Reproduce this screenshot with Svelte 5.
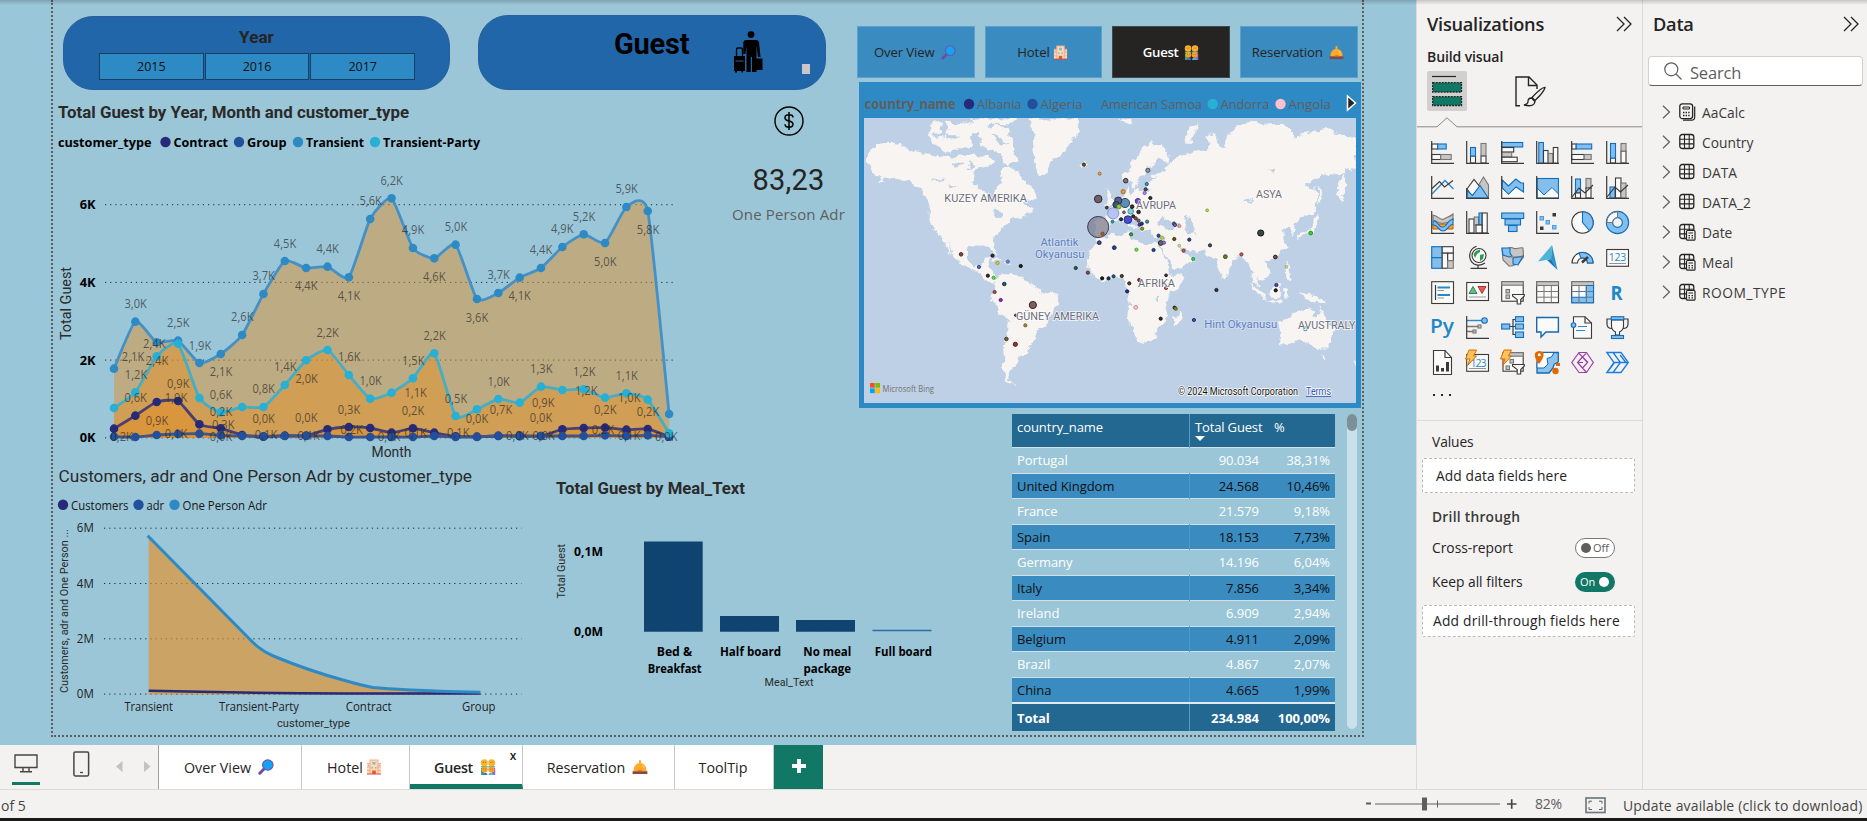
<script>
  const xs = Array.from({ length: 27 }, (_, i) => 114 + i * 21.35);
  const toY = (list) => list.map((v) => 160 + v / 3);
  const series = [
    { name: 'Transient', line: '#4590c4', dot: '#2e8ac4', ys: toY([626, 485, 547, 542, 609, 582, 525, 402, 303, 324, 320, 352, 177, 115, 264, 295, 254, 417, 399, 353, 324, 261, 223, 249, 141, 153, 762]) },
    { name: 'Transient-Party', line: '#43aec6', dot: '#28b0d4', ys: toY([744, 697, 589, 551, 714, 757, 741, 741, 675, 601, 570, 645, 716, 698, 655, 580, 768, 748, 717, 728, 680, 690, 688, 713, 700, 719, 820]) },
    { name: 'Contract', line: '#4a4070', dot: '#262a78', ys: toY([806, 767, 726, 723, 793, 805, 825, 830, 827, 827, 808, 801, 804, 818, 805, 818, 829, 830, 828, 827, 828, 808, 804, 803, 809, 807, 830]) },
    { name: 'Group', line: '#405588', dot: '#24509b', ys: toY([830, 831, 825, 822, 821, 826, 828, 829, 828, 828, 828, 831, 831, 831, 831, 828, 831, 831, 827, 829, 828, 828, 828, 826, 828, 826, 830]) }
  ];
  function curve(ys) {
    const k = 1 / 11;
    let d = `M${xs[0]} ${ys[0]}`;
    for (let i = 0; i < ys.length - 1; i++) {
      const a = Math.max(i - 1, 0);
      const b = Math.min(i + 2, ys.length - 1);
      d += `C${xs[i] + (xs[i + 1] - xs[a]) * k} ${ys[i] + (ys[i + 1] - ys[a]) * k} ${xs[i + 1] - (xs[b] - xs[i]) * k} ${ys[i + 1] - (ys[b] - ys[i]) * k} ${xs[i + 1]} ${ys[i + 1]}`;
    }
    return d;
  }
  const pointLabels = [
    ['3,0K', 135.7, 303.7], ['2,5K', 178.3, 322.7], ['2,4K', 154.3, 343.7], ['1,9K', 200, 345.7], ['2,1K', 133, 356.7], ['2,4K', 157, 360.7], ['1,2K', 136, 374.7], ['2,1K', 221, 371.7],
    ['0,9K', 178.3, 383.7], ['0,6K', 135.7, 397.7], ['1,0K', 176, 397.7], ['0,6K', 221, 394.7], ['0,2K', 221, 411.7], ['0,9K', 157, 420.7], ['0,3K', 223.3, 424.7], ['0,2K', 121.7, 436.7], ['0,1K', 176, 434], ['0,0K', 221, 436.3],
    ['2,6K', 242.3, 316.7], ['3,7K', 263.7, 275.7], ['4,5K', 285, 243.7], ['4,4K', 306.3, 286], ['4,4K', 327.7, 248.7], ['4,1K', 349, 295.7], ['5,6K', 370.7, 201], ['2,2K', 327.7, 332.7], ['1,6K', 349.3, 356.7], ['1,0K', 370.7, 380.7],
    ['1,4K', 285.3, 366.7], ['2,0K', 306.7, 378.7], ['0,8K', 263.7, 388.7], ['0,0K', 263.7, 418.7], ['0,0K', 306.3, 417.7], ['0,3K', 349, 409.7], ['0,2K', 351.7, 429.3], ['0,1K', 266, 434.3], ['0,1K', 308.7, 435.3],
    ['6,2K', 391.7, 180.7], ['4,9K', 413, 229.7], ['5,0K', 456, 226.7], ['4,6K', 434.3, 276.7], ['3,6K', 477, 317.7], ['3,7K', 498.7, 274.7], ['4,1K', 519.7, 295.7], ['4,4K', 541, 249.3], ['4,9K', 562.3, 228.7], ['5,2K', 584, 216.7],
    ['5,0K', 605.3, 261.7], ['5,9K', 626.7, 189], ['5,8K', 648, 229.7], ['2,2K', 434.7, 335.7], ['1,5K', 413.3, 360.3], ['1,1K', 415.7, 392.7], ['0,2K', 413, 410.3], ['0,1K', 415.7, 432.7], ['0,0K', 389, 436.3], ['0,5K', 456, 398.3],
    ['0,0K', 477, 418.7], ['0,1K', 458.3, 432.3], ['1,0K', 498.7, 381.7], ['0,7K', 501, 409.7], ['1,3K', 541.3, 368.7], ['0,9K', 543.3, 402.7], ['0,0K', 541, 417.7], ['1,2K', 584.3, 371.7], ['1,2K', 586.3, 390.7], ['0,2K', 605.3, 409.7],
    ['0,2K', 603, 429.3], ['1,1K', 626.7, 375.7], ['1,0K', 629.3, 397.3], ['0,2K', 648, 411.3], ['0,1K', 629, 435.3], ['0,0K', 517.3, 436], ['0,0K', 543.7, 436], ['0,0K', 666.3, 436.3]
  ];

  const land = [
    'M45 480L55 450L75 430L115 426L180 452L235 462L290 470L340 462L385 468L400 484L372 500L345 516L343 550L372 570L385 602L400 598L398 570L425 548L420 510L440 500L462 508L480 535L515 565L525 590L505 602L480 605L515 625L490 645L450 655L430 680L412 700L398 725L411 765L402 764L388 735L350 735L330 745L328 775L345 800L368 795L375 775L392 772L386 800L402 818L402 838L420 842L398 850L375 835L350 810L320 795L300 785L270 715L285 760L275 750L252 700L232 684L222 660L222 620L215 590L190 560L160 540L130 535L105 532L75 552L90 530L60 520Z',
    'M220 370L270 360L300 372L340 365L380 356L392 380L345 400L330 440L270 455L225 430Z',
    'M360 390L400 375L440 380L450 430L470 480L440 495L420 460L370 440Z', 'M330 354H470L455 372L350 368Z',
    'M495 354H640L632 410L590 465L560 480L548 525L530 527L515 480L508 440L518 400Z',
    'M640 490L655 484L671 492L655 504L643 500Z',
    'M405 832L430 820L470 828L505 845L525 868L580 888L583 910L558 945L550 975L525 992L515 1020L495 1050L495 1060L470 1075L462 1095L448 1100L447 1120L440 1140L460 1157L436 1145L430 1110L430 1060L438 1010L440 960L415 935L392 895L402 862Z',
    'M690 718L720 705L785 695L790 718L830 735L860 728L872 748L890 800L900 828L933 822L922 855L888 890L882 920L888 955L860 985L855 1010L830 1025L805 1028L793 985L780 950L786 905L775 875L775 845L745 830L700 840L675 822L662 790L668 755Z',
    'M926 932L928 950L915 980L905 978L906 950Z',
    'M767 542L762 522L790 490L810 450L840 425L870 435L890 460L888 490L856 474L848 490L830 505L815 530L805 562L795 574L788 545Z',
    'M685 702L684 660L722 655L715 632L735 612L757 592L770 575L773 555L785 575L828 570L832 545L860 535L840 530L870 512L895 488L930 462L975 452L1005 445L1000 410L1015 396L1030 430L1050 440L1055 405L1090 375L1120 360L1160 372L1210 370L1250 405L1330 385L1417 425V505L1385 512L1388 560L1375 602L1364 585L1366 545L1390 520L1330 522L1290 535L1270 560L1305 565L1308 605L1290 640L1260 650L1240 665L1250 690L1240 702L1225 682L1210 682L1218 735L1200 765L1165 780L1172 825L1150 835L1132 825L1145 862L1125 840L1115 790L1095 765L1070 780L1048 835L1030 800L1025 775L985 755L950 750L920 738L935 762L965 772L950 792L905 810L890 780L870 735L880 715L845 708L840 690L822 688L812 694L800 672L778 655L800 688L790 684L765 657L735 665L715 702L692 710Z',
    'M716 560L730 570L742 606L715 614L722 592Z', 'M940 430L945 385L975 365L970 385L952 410L958 430Z', 'M745 360L790 354L785 372Z',
    'M1309 636L1316 652L1300 690L1270 700L1250 716L1258 698L1290 680Z', 'M1313 560L1322 590L1316 618L1310 600Z',
    'M1118 845L1150 872L1165 897L1155 897L1130 870Z', 'M1160 900L1215 904L1200 910Z', 'M1174 870L1202 848L1206 865L1195 895L1178 890Z', 'M1218 785L1226 790L1236 840L1224 830Z', 'M1215 862L1228 865L1220 892L1213 880Z',
    'M1255 873L1290 882L1332 903L1322 910L1270 895Z',
    'M1198 968L1230 950L1255 935L1280 923L1297 930L1290 945L1305 953L1315 920L1330 950L1352 988L1350 1012L1333 1047L1310 1048L1290 1030L1260 1015L1230 1030L1202 1032L1206 1005Z',
    'M1318 1064L1330 1066L1324 1078Z', 'M1408 1078H1417V1096Z', 'M385 768L425 778L408 780Z', 'M430 784L450 788L432 792Z'
  ];
  const water = ['M858 672L880 652L898 660L925 680L880 684Z', 'M935 650L950 645L956 665L966 702L944 695Z', 'M868 745L905 815L895 800Z', 'M810 560L835 515L825 560L845 566L830 574Z', 'M270 550L300 562L280 566Z', 'M225 540L260 530L250 542Z', 'M395 625L430 630L420 660L405 650Z', 'M850 888L866 892L858 902Z', 'M1170 508L1186 505L1180 522Z', 'M1095 610L1130 590L1118 606Z', 'M230 395L290 405L300 415L240 408Z', 'M260 360L275 380L262 420L255 390Z', 'M300 440L345 452L310 458Z', 'M395 400L440 430L420 436Z', 'M340 480L350 500L325 506Z', 'M285 480L320 492L300 498Z'];
  const bubbles = [
    [695, 681, 11, '#77778eb8', '#332f44'], [737, 640, 6, '#b7c3f2', '#7a8fd0'], [770, 609, 5, '#5a8fb4', '#1d3f66'], [778, 659, 4.3, '#4650c8', '#20269a'], [695, 597, 4.2, '#6f6068', '#2b2022'], [751, 602, 4, '#5b5b8a', '#24244a'], [745, 614, 3.6, '#3d5570', '#1b2f44'], [753, 620, 2.6, '#9fc93c', '#5e8420'], [786, 634, 3.2, '#7fd0de', '#328ea0'], [806, 603, 3, '#7746c8', '#44208c'],
    [512, 915, 4, '#80605f', '#2d1414'], [1150, 699, 3.5, '#3e4744', '#0d1110'], [772, 542, 2.7, '#767688', '#222'], [834, 511, 2.5, '#8f98a0', '#444'], [765, 575, 2.5, '#e8973e', '#a3651c'], [655, 494, 2, '#775330', '#30200d'], [699, 521, 2, '#d99a4c', '#a87028'], [831, 552, 2, '#3c93bd', '#155b8a'], [828, 568, 2, '#555', '#222'], [825, 579, 2, '#a28be0', '#7358b8'], [841, 594, 2, '#333', '#111'], [808, 636, 2.2, '#333', '#111'], [790, 620, 2.2, '#333', '#111'], [767, 637, 1.8, '#777', '#444'], [719, 623, 1.8, '#444', '#222'], [793, 649, 2, '#333', '#111'], [800, 655, 2, '#8c4a4a', '#531f1f'], [759, 658, 2, '#334', '#112'], [735, 665, 1.8, '#22a0b0', '#0e6878'], [808, 662, 2, '#6a6a50', '#333'], [811, 674, 2, '#444498', '#1f1f55'], [817, 671, 2, '#312ea0', '#17145a'], [832, 665, 2, '#419096', '#205a60'], [818, 686, 2, '#86a023', '#4b5d12'], [787, 703, 2, '#35a044', '#176020'], [707, 701, 2, '#b5661e', '#743a0a'],
    [864, 707, 2, '#1f5b9a', '#0d2f58'], [874, 713, 2, '#d8d23e', '#a09a20'], [870, 729, 2.8, '#666', '#222'], [879, 728, 2, '#8a72d0', '#553f99'], [907, 671, 2, '#6c6060', '#3c3434'], [910, 675, 2, '#7266a8', '#3c3468'], [922, 678, 2, '#e0a8a8', '#b77676'], [908, 717, 2, '#6b5320', '#33260b'], [950, 719, 2, '#334880', '#131e44'], [922, 737, 1.8, '#ddd8a0', '#a9a25b'], [934, 752, 2, '#c05a5a', '#803030'], [961, 777, 2, '#2fd05a', '#17943a'], [1000, 631, 1.8, '#b5e04c', '#7ba51e'], [1290, 699, 2.3, '#2fd42f', '#139813'], [1008, 736, 2, '#4d4668', '#221c38'], [1051, 770, 2.3, '#6c8030', '#333f10'], [1096, 763, 2, '#b96060', '#7c2f2f'], [1191, 771, 2.3, '#80504e', '#2f1515'], [1222, 800, 1.8, '#d6dc9e', '#96a05c'], [1194, 855, 2, '#4a4ab0', '#1e1e66'], [1192, 871, 2, '#222c2c', '#000'], [1026, 870, 2, '#333', '#111'], [963, 960, 2, '#5a4b98', '#2d2160'], [1275, 986, 2.5, '#9bd6e4', '#3a8aa6'],
    [698, 728, 2.3, '#4b4b80', '#1d1d3e'], [740, 743, 2.3, '#27409a', '#101f55'], [802, 749, 2, '#6fe04c', '#38a51c'], [850, 750, 2, '#27409a', '#101f55'], [632, 804, 2, '#2c5b54', '#112e29'], [666, 818, 2, '#7d4f52', '#4a2426'], [706, 835, 2, '#222', '#000'], [724, 835, 2, '#213c4e', '#091a26'], [738, 829, 2, '#285c80', '#0f3048'], [761, 828, 2, '#4a4a30', '#1e1e0e'], [782, 850, 2, '#5b3a3a', '#2a1212'], [810, 840, 2, '#8a3434', '#4c1010'], [885, 826, 1.8, '#444', '#111'], [885, 864, 2, '#b06058', '#70302a'], [776, 874, 2, '#2a2f90', '#11144c'], [800, 922, 2.3, '#f2c9cd', '#d07c86'], [870, 956, 2, '#28303a', '#0a0d12'], [909, 923, 2, '#6b2a2a', '#360d0d'], [912, 926, 2, '#8d8d1c', '#565608'],
    [311, 763, 2.2, '#7c5048', '#3f201b'], [361, 801, 2, '#5a6fb8', '#2e4080'], [399, 767, 2, '#3a2c2c', '#160c0c'], [413, 789, 2, '#d8d23e', '#97911d'], [442, 785, 2, '#6a86cc', '#4260a4'], [478, 798, 2, '#222', '#000'], [386, 827, 2, '#382c38', '#120c12'], [402, 833, 2, '#60e048', '#30a020'], [432, 852, 2.2, '#245a66', '#0c2e36'], [405, 876, 2, '#a04c5c', '#702838'], [422, 900, 2, '#8a30b0', '#551078'], [464, 946, 1.6, '#5a2626', '#300'], [491, 976, 2, '#a58a40', '#6a5820'], [438, 1017, 2.2, '#7a6438', '#423416'], [463, 1033, 2.5, '#8f3434', '#541212']
  ];
  const mapLabels = [
    ['KUZEY AMERIKA', 944.3, 202, 82.5, 'l'], ['ASYA', 1256, 198, 26, 'l'], ['AVRUPA', 1136, 208.5, 40, 'l'], ['AFRIKA', 1138, 286.5, 37, 'l'], ['GÜNEY AMERIKA', 1016, 319.5, 83, 'l'], ['AVUSTRALY', 1298, 328.5, 57.5, 'l'],
    ['Atlantik', 1040.4, 246, 38, 'o'], ['Okyanusu', 1035, 258, 49.6, 'o'], ['Hint Okyanusu', 1204.3, 328, 73, 'o']
  ];

  const rows = [
    ['Portugal', '90.034', '38,31%'], ['United Kingdom', '24.568', '10,46%'], ['France', '21.579', '9,18%'], ['Spain', '18.153', '7,73%'], ['Germany', '14.196', '6,04%'],
    ['Italy', '7.856', '3,34%'], ['Ireland', '6.909', '2,94%'], ['Belgium', '4.911', '2,09%'], ['Brazil', '4.867', '2,07%'], ['China', '4.665', '1,99%']
  ];
  const nav = [['Over View', 'lens'], ['Hotel', 'hotel'], ['Guest', 'people'], ['Reservation', 'bell']];
  const tabs = [
    { name: 'Over View', icon: 'lens', width: 143 }, { name: 'Hotel', icon: 'hotel', width: 108 }, { name: 'Guest', icon: 'people', width: 113 },
    { name: 'Reservation', icon: 'bell', width: 152 }, { name: 'ToolTip', icon: '', width: 99 }
  ];
  const tables = [['AaCalc', 'calc'], ['Country', 'grid'], ['DATA', 'grid'], ['DATA_2', 'grid'], ['Date', 'calcgrid'], ['Meal', 'calcgrid'], ['ROOM_TYPE', 'calcgrid']];

  const K = 'stroke="#3b3a39" stroke-width="1.2"';
  const B = 'fill="#83beec" stroke="#106ebe" stroke-width="1.1"';
  const G = 'fill="#c8c6c4" stroke="#797775" stroke-width="1.1"';
  const W = 'fill="#fafafa" stroke="#3b3a39" stroke-width="1.1"';
  const axis = `<path d="M.7 0V22.4H23" fill="none" ${K}/>`;
  const r = (x, y, w, h, s) => `<rect x="${x}" y="${y}" width="${w}" height="${h}" ${s}/>`;
  const p = (d, s) => `<path d="${d}" ${s}/>`;
  const N = 'fill="none"';
  const bolt = p('M3 -1H10.5L7.5 5H10.500L1.5 14.5L4 8H-.5Z', 'fill="#fcc25b" stroke="#d86b00" stroke-width="1"');
  const funnel = p('M11.5 13.5H23.3V15L19.7 18.5V23H16.2V18.5L11.5 15Z', W);
  const icons = [
    r(.7, 3, 6, 5, W) + r(6.7, 3, 8.5, 5, B) + r(.7, 13.5, 9, 5, W) + r(9.7, 13.5, 10.5, 5, G) + axis,
    r(4.5, 15, 5, 7, W) + r(4.5, 6.5, 5, 8.5, B) + r(15, 15, 5, 7, W) + r(15, 2.5, 5, 12, G) + axis,
    r(.7, 1.5, 21, 4.5, B) + r(.7, 6.5, 12, 4.5, W) + r(.7, 11.5, 10, 4.5, G) + r(.7, 16.2, 15.5, 4.5, W) + axis,
    r(2.8, 1.5, 4.6, 20.7, B) + r(7.5, 9.5, 4.5, 12.7, W) + r(12.3, 12.5, 4.7, 9.7, G) + r(17.3, 6.5, 4.5, 15.7, W) + axis,
    r(.7, 3, 4.5, 5, W) + r(5.2, 3, 15.5, 5, B) + r(.7, 13.5, 12.5, 5, W) + r(13.2, 13.5, 7, 5, G) + axis,
    r(4.5, 17, 5, 5, W) + r(4.5, 2.5, 5, 14.5, B) + r(15, 10, 5, 12, W) + r(15, 2.5, 5, 7.5, G) + axis,
    p('M1 18L14 4.5L22.5 13', `${N} stroke="#2a87c9" stroke-width="1.3"`) + p('M1 12.5L8.5 5.5L13.5 11L22 4.5', `${N} ${K}`) + axis,
    p('M9 15L17.5 1L22.5 9V22H14Z', G) + p('M1 13L8 3.5L14 11L6 20Z', W) + p('M1 22V14.5L6.5 19.5L14 9.5L22.3 22Z', B) + p('M.7 12V22.4H23', `${N} ${K}`),
    p('M1.2 4L7.5 10L14.8 3L20 7H22.5V16L15 11L7.5 18.5L1.2 12Z', B) + p('M1.2 13L7.5 19L15 12L22.5 18V22H1.2Z', 'fill="#fafafa"') + axis,
    r(1.2, 2.5, 21.2, 19, B) + p('M1.2 12L8 19L16 11.5L22.5 18V22H1.2Z', 'fill="#fafafa" stroke="#106ebe" stroke-width="1"') + axis,
    r(4.5, 3, 5, 14, B) + r(4.5, 17, 5, 5, W) + r(15, 2.5, 5, 10, G) + r(15, 12, 5, 10, W) + p('M1 21L8 12L14 17L22 9', `${N} ${K}`) + axis,
    r(4, 11, 5, 11, B) + r(9.5, 2, 5.5, 20, W) + r(15, 7, 5, 15, G) + p('M1 21L9 11L14.5 16L22 9', `${N} ${K}`) + axis,
    p('M2 4C8 5 9 10 13 8S20 5 22 3V9C17 12 14 13 9 12S5 9 2 9Z', G) + p('M2 13H22V18H2Z', 'fill="#f9a13a" stroke="#b85c00"') + p('M2 10C7 9 7 17 12 16S15 10 22 8V13C17 14 17 20 12 20S7 13 2 14Z', B) + axis,
    r(3, 8, 5, 14, W) + r(8.2, 6, 4.5, 8, G) + r(13, 2, 3, 12, B) + r(16.2, 2, 5, 20, W) + r(10, 14, 6, 8, W) + axis,
    r(.7, 2, 22, 5.5, B) + r(4, 8, 15.5, 6, B) + r(7.5, 14.5, 8.5, 6, B),
    r(4, 5.5, 3.5, 3.5, 'fill="#83beec" stroke="#4d9bdb"') + r(16.5, 2, 3.5, 3.5, 'fill="#3b3a39"') + r(10, 9.5, 3.5, 3.5, 'fill="#83beec" stroke="#4d9bdb"') + r(4, 15.5, 3.5, 3.5, 'fill="#3b3a39"') + r(16.5, 14.5, 3.5, 3.5, 'fill="#83beec" stroke="#4d9bdb"') + axis,
    `<circle cx="11.5" cy="11.5" r="10.7" ${W}/>` + p('M11.5 .8A10.7 10.7 0 0 1 18.5 19.5L11.5 11.5Z', B),
    `<circle cx="11.5" cy="11.5" r="8" fill="none" stroke="#106ebe" stroke-width="7.4"/><circle cx="11.5" cy="11.5" r="8" fill="none" stroke="#83beec" stroke-width="5.2"/>` + p('M.8 11.5A10.7 10.7 0 0 1 11.5 .8V6.5A5 5 0 0 0 6.5 11.5Z', 'fill="#fafafa" stroke="#797775"'),
    r(.7, .7, 10.5, 11, B) + r(.7, 11.7, 10.5, 10.6, B) + r(11.2, .7, 11.1, 6.5, W) + r(11.2, 7.2, 5.5, 15, W) + r(16.7, 7.2, 5.6, 7.5, W) + r(16.7, 14.7, 5.6, 7.6, G),
    `<circle cx="13" cy="9.5" r="7" ${W}/>` + p('M10 5L14 3.5L14 6L11 8L9 12L7.5 8ZM14 9L18 8L17 13L14 15Z', 'fill="#2b9b4c"') + p('M10.5 .3A10 10 0 0 0 8 18C12 20 16 19 19 17M12 19V22M4.5 22.3H21', `${N} ${K}`),
    p('M1 3C5 4 9 0 12 2S18 1 22 2L22.5 11L18 17L11 20L8 20L2 14Z', G) + p('M1 2H9V7L11 10L8 11L2 9Z M12 12L22 10L17 19L12 18Z', B) + p('M9 11H22', `${N} stroke="#797775"`),
    p('M16 -1L2 15.5L15 13Z', 'fill="#4cb5d8"') + p('M16 -1L15 13L21.5 24Z', 'fill="#2a94c4"') + p('M11 14L15 13L21.5 24Z', 'fill="#1574c4"'),
    p('M1 17A10.5 10.5 0 0 1 22 17H16.5A5 5 0 0 0 6.5 17Z', W) + p('M8 7A10.5 10.5 0 0 1 22 17H16.5A5 5 0 0 0 10 12Z', B) + p('M11 16.5L17 11', `${N} stroke="#3b3a39" stroke-width="2.4"`),
    r(.7, 3.5, 21.8, 16.8, W) + '<text x="2.8" y="14.5" font-size="10.5" fill="#2a87c9" textLength="17.5">123</text>' + p('M3 17.5H20', `${N} stroke="#979593"`),
    r(.7, .7, 21.8, 21.8, W) + p('M4.5 4V19', `${N} ${K}`) + p('M6.5 6.5H19M6.5 14H19', `${N} stroke="#2a87c9" stroke-width="2"`) + p('M6.5 9.5H13M6.5 17H13', `${N} stroke="#979593"`),
    r(.7, 1.5, 21.8, 18, W) + p('M3 12.5L7 5.5L11 12.5Z', 'fill="#69b98a" stroke="#2b8a4c"') + p('M12 5.5H20L16 12.5Z', 'fill="#e85a5a" stroke="#b82f2f"') + p('M3 16H20', `${N} stroke="#979593"`),
    r(.7, .7, 21.5, 19.5, W) + r(.7, .7, 21.5, 3.5, G) + r(5, 8.5, 3.5, 3.5, G) + r(5, 14, 3.5, 3.5, G) + funnel,
    r(.7, .7, 21.8, 21, W) + r(.7, .7, 21.8, 3.8, G) + p('M.7 10.5H22.5M.7 16.2H22.5M8 4.5V21.7M15.3 4.5V21.7', `${N} stroke="#797775"`),
    r(.7, .7, 21.8, 21, W) + r(.7, .7, 21.8, 3.8, G) + p('M15.3 4.5H22.5V21.7H.7V16.2H15.3Z', B) + p('M.7 10.5H22.5M8 4.5V21.7M15.3 4.5V21.7M15 16.2H22.5', `${N} stroke="#5a7896"`),
    '<text x="4.5" y="18.5" font-size="19.5" font-weight="700" fill="#2087c7" textLength="12" lengthAdjust="spacingAndGlyphs">R</text>',
    '<text x="-1" y="16.500" font-size="20" font-weight="600" fill="#2087c7" textLength="24" lengthAdjust="spacingAndGlyphs">Py</text>',
    p('M.7 4.5H16', `${N} stroke="#2a87c9" stroke-width="1.4"`) + p('M.7 10.5H12M.7 15.5H8', `${N} stroke="#797775" stroke-width="1.4"`) + `<circle cx="18.5" cy="4.5" r="2.8" ${B}/>` + r(12, 9, 3, 3, G) + r(7, 14, 3, 3, G) + axis,
    p('M8 10.5H12V3.5H14.5M12 10.5V18.5H14.5M12 10.5H14.5', `${N} ${K}`) + r(.7, 8, 8, 5, B) + r(14.5, .7, 8, 5, B) + r(14.5, 8, 8, 5, B) + r(14.5, 16, 8, 5.5, B),
    p('M.7 1.5H22.4V16H10L5 21V16H.7Z', 'fill="#fafafa" stroke="#1668b0" stroke-width="1.4"'),
    p('M2.5 .7H14L20.5 7V22.3H2.5Z', W) + p('M14 .7V7H20.5', `${N} ${K}`) + `<circle cx="2.5" cy="9" r="2.3" ${B}/>` + p('M7 10.5H16M5 14.5H14', `${N} stroke="#2a87c9" stroke-width="1.2"`),
    p('M5.5 3H1V8C1 11 3 12.5 6 12.5M17.5 3H22V8C22 11 20 12.5 17 12.5', `${N} ${K}`) + p('M5.5 4H17.5V10C17.5 14 14.5 15.5 13.5 16V19H9.5V16C8.5 15.5 5.5 14 5.5 10Z', W) + r(5.3, .7, 12.5, 3, B) + r(5.5, 19.5, 12, 3, B),
    p('M2.5 -.5H14L20.5 6.500V23.5H2.5Z', W) + p('M14 -.5V6.500H20.5', `${N} ${K}`) + p('M6.5 20.5V14.5M11.5 20.5V17M16.5 20.5V11', `${N} stroke="#3b3a39" stroke-width="3"`),
    r(.7, 3.5, 21.8, 16.8, W) + '<text x="4.5" y="15.5" font-size="10.5" fill="#2a87c9" textLength="16">123</text>' + p('M3 17.5H20', `${N} stroke="#979593"`) + bolt,
    r(2, 1.7, 20.2, 18.5, W) + r(2, 1.7, 20.2, 3.5, G) + r(5, 15, 3.5, 3.5, G) + r(9, 8.5, 3.5, 3.5, G) + funnel + bolt,
    p('M6 1.500H22.3V11L18 13.500L17 17L13 22H1V10Z', 'fill="#8cc4ee" stroke="#1668b0" stroke-width="1.300"') + p('M7 1.500H18L15.500 6L11 7.500L12 13L8 17H1V12Z', 'fill="#fafafa" stroke="#1668b0"') + p('M3 13C-1 8-1.5 5-1 2.5C0-1 7-1 7.5 2.5C8 6 6 9 3 13Z', 'fill="#e06a00"') + `<circle cx="3.3" cy="3.8" r="1.5" fill="#fff"/><circle cx="19.5" cy="20" r="3.2" fill="#e06a00"/>` + r(20, 12, 4, 3, 'fill="#e06a00"'),
    p('M8 2.500L11.500 6L15 2.500M8 1.500H15.500L22.300 11.500L15.500 21.500H8L.8 11.500ZM11.500 6L6.500 11.500L11.500 17L16.500 11.500ZM11.500 6L17 11.500M11.500 17L15 21M6.500 11.500L12 11.500', `${N} stroke="#9a3fa8" stroke-width="1.2"`),
    p('M.8 1.5H15L22.3 11.5L15 21.5H.8L8 11.5ZM7 1.5L14.5 11.5L7 21.5M8 11.5H22M14 4L19.5 11M3 19L8.5 11.5', `${N} stroke="#1a7ce0" stroke-width="1.3"`)
  ];
</script>

{#snippet emoji(kind, size)}
  <svg class="emoji" width={size} height={size} viewBox="0 0 16 16">
    {#if kind === 'lens'}
      <path d="M1.8 14.2L6.5 9.5" stroke="#6a4fa8" stroke-width="3" stroke-linecap="round" />
      <circle cx="9.8" cy="6" r="5.2" fill="#12a4f4" stroke="#7454a8" stroke-width="1.2" />
    {:else if kind === 'hotel'}
      <path d="M1 4.5H4V1H12V4.5H15V15H1Z" fill="#fbdcb0" />
      <path d="M3.5 1H12.5M1 4.5H4M12 4.5H15M1 8H4.5M11.5 8H15M1 11.5H4.5M11.5 11.5H15M4 1V15M12 1V15" stroke="#f5a48e" stroke-width=".9" fill="none" />
      <path d="M6.5 3H9.5V5.5H6.5ZM5.5 8H7V9.5H5.5ZM9 8H10.5V9.5H9ZM2 5.7H3V7H2ZM13 5.7H14V7H13Z" fill="#8ab6d8" />
      <path d="M6.2 15V11.5H9.8V15Z" fill="#e8552d" /><path d="M1 15H15" stroke="#d8483a" />
    {:else if kind === 'people'}
      <path d="M1 16V9H4V16Z" fill="#4aa564" /><path d="M12 16V9H15.2V16Z" fill="#a75cc0" />
      <path d="M1 7H7.700V8.500H1Z" fill="#5cc08a" /><path d="M8.300 7H15V8.500H8.300Z" fill="#5cb0c0" />
      <circle cx="4.3" cy="3.7" r="3.5" fill="#fbb02e" /><circle cx="11.7" cy="3.7" r="3.5" fill="#fbb02e" />
      <circle cx="4.700" cy="10.500" r="3.100" fill="#f3a12c" /><circle cx="11.300" cy="10.500" r="3.100" fill="#f3a12c" />
      <path d="M2.8 3.300H4M5 3.300H6M10.2 3.300H11.2M12.4 3.300H13.4M3.300 10H4.200M5.4 10H6.2M10 10H10.800M12 10H12.800" stroke="#9a6515" stroke-width=".8" />
      <path d="M2.2 16A2.8 2.8 0 0 1 7.7 16Z" fill="#3f78c8" /><path d="M8.3 16A2.8 2.8 0 0 1 13.8 16Z" fill="#4cb6dc" />
    {:else}
      <path d="M1.5 12.2C1.5 7 4.5 4 8 4S14.5 7 14.5 12.2Z" fill="#ffa928" />
      <path d="M7 1.2H9V4.5H7Z" fill="#ffa928" /><path d="M10.5 6L12 9" stroke="#ffd77a" stroke-width="1" />
      <path d="M.6 12.2H15.4V15H.6Z" fill="#84493f" /><path d="M6 11.5H10" stroke="#f26b22" stroke-width="1.2" />
    {/if}
  </svg>
{/snippet}

{#snippet chevrons()}
  <svg width="16" height="16" viewBox="0 0 16 16"><path d="M1 1L8 8L1 15M8 1L15 8L8 15" fill="none" stroke="#252423" stroke-width="1.3" /></svg>
{/snippet}

{#snippet legendItem(text, x, y, w, color)}
  <circle cx={x - 8} cy={y - 4.7} r="5.2" fill={color} />
  <text {x} {y} textLength={w} lengthAdjust="spacingAndGlyphs">{text}</text>
{/snippet}

<div class="app">
  <div class="workspace">
    <main class="report">
      <div class="canvas">
        <div class="page">
          <section class="col-left">
            <div class="headers">
              <div class="year-card">
                <h2>Year</h2>
                <div class="years"><span>2015</span><span>2016</span><span>2017</span></div>
              </div>
              <div class="guest-card">
                <h1>Guest</h1>
                <svg class="traveller" width="30" height="42" viewBox="0 0 30 42">
                  <circle cx="18" cy="3.6" r="3.4" />
                  <path d="M13 9H23Q25.500 9 26 11L27.500 26H25L23.500 14.500V41H19V26H17.800V41H13.500V15L12.500 23H10.300V11Q11 9 13 9Z" />
                  <path d="M22.500 27.500H29.500V39H22.500Z" />
                  <path d="M3.500 25V18.500Q3.500 17 5 17H8Q9.500 17 9.500 18.500V25" fill="none" stroke="#000" stroke-width="1.300" />
                  <path d="M1 25H12V40H10V41.500H8.500V40H4V41.500H2V40H1Z" /><path d="M2.500 30H10.500" stroke="#2066a8" stroke-width="1" />
                </svg>
                <i class="handle"></i>
              </div>
            </div>

            <div class="row-main">
              <svg width="650" height="367" viewBox="53 95 650 367">
                <text class="din bold" x="58" y="118" font-size="17" textLength="351" lengthAdjust="spacingAndGlyphs">Total Guest by Year, Month and customer_type</text>
                <g class="semi" font-size="13">
                  <text x="58" y="146.700" textLength="93.500" lengthAdjust="spacingAndGlyphs">customer_type</text>
                  {@render legendItem('Contract', 173.5, 146.7, 54.5, '#262a78')}
                  {@render legendItem('Group', 247, 146.7, 39.5, '#24509b')}
                  {@render legendItem('Transient', 306, 146.7, 58, '#2e8ac4')}
                  {@render legendItem('Transient-Party', 383, 146.7, 97, '#28b0d4')}
                </g>
                {#each ['6K', '4K', '2K', '0K'] as tick, i}
                  <text class="semi" x="95.500" y={209.3 + i * 77.7} font-size="12.800" text-anchor="end">{tick}</text>
                  <path d="M105 {204.7 + i * 77.7}H675" stroke="#1b2a33" stroke-dasharray="1.200 3.950" />
                {/each}
                {#each series as s}
                  <path d="{curve(s.ys)}V437.700H{xs[0]}Z" fill="#e88e1e" fill-opacity=".46" />
                {/each}
                {#each series as s}
                  <path d={curve(s.ys)} fill="none" stroke={s.line} stroke-width="2.800" />
                {/each}
                {#each [series[0], series[2], series[3], series[1]] as s}
                  {#each s.ys as y, i}<circle cx={xs[i]} cy={y} r="4.300" fill={s.dot} />{/each}
                {/each}
                {#each pointLabels as [t, x, y]}
                  <text x={x - 11.2} y={y + 4.3} font-size="12" fill="#252423" fill-opacity=".68" textLength="22.400" lengthAdjust="spacingAndGlyphs">{t}</text>
                {/each}
                <text class="din" x="371.500" y="457.200" font-size="14" textLength="40" lengthAdjust="spacingAndGlyphs">Month</text>
                <text class="din" transform="translate(71 340) rotate(-90)" font-size="14" textLength="73" lengthAdjust="spacingAndGlyphs">Total Guest</text>
              </svg>
              <div class="kpi">
                <svg width="30" height="30" viewBox="0 0 30 30"><circle cx="15" cy="15" r="14" fill="none" stroke="#000" stroke-width="1.400" /><path d="M19 11.500Q19 8.800 15 8.800T11 11.800Q11 14.300 15 15T19 18.300Q19 21.200 15 21.200T11 18.300M15 6V24" fill="none" stroke="#000" stroke-width="1.500" /></svg>
                <strong>83,23</strong>
                <span>One Person Adr</span>
              </div>
            </div>

            <div class="row-bottom">
              <svg width="487" height="273" viewBox="53 462 487 273">
                <text class="din" x="58.500" y="482" font-size="17" textLength="413.500" lengthAdjust="spacingAndGlyphs">Customers, adr and One Person Adr by customer_type</text>
                <g font-size="12.500" fill="#151515">
                  {@render legendItem('Customers', 71, 509.5, 57.5, '#262a78')}
                  {@render legendItem('adr', 146.5, 509.5, 17.5, '#24509b')}
                  {@render legendItem('One Person Adr', 182.5, 509.5, 84.5, '#2e8ac4')}
                </g>
                {#each ['6M', '4M', '2M', '0M'] as tick, i}
                  <text x="76.800" y={532.3 + i * 55.3} font-size="12.500" fill="#222" textLength="17" lengthAdjust="spacingAndGlyphs">{tick}</text>
                  <path d="M104 {528.2 + i * 55.3}H521.500" stroke="#1b2a33" stroke-dasharray="1.200 3.950" />
                {/each}
                <path d="M148.700 536.700L253 642.500Q262 651.500 277 657.500Q310 671 343 680Q362 685.500 373 687.500Q395 690 480 692.700V694.500H148.700Z" fill="#e88e1e" fill-opacity=".62" />
                <path d="M148.700 690.800Q240 693 345 693.500L480 693.500" fill="none" stroke="#262a78" stroke-width="2.500" />
                <path d="M148.700 536.700L253 642.500Q262 651.500 277 657.500Q310 671 343 680Q362 685.500 373 687.500Q395 690 479 692.300" fill="none" stroke="#2e8ac4" stroke-width="3" stroke-linecap="square" />
                <g font-size="12.500" fill="#222">
                  <text x="124.500" y="710.500" textLength="48.500" lengthAdjust="spacingAndGlyphs">Transient</text>
                  <text x="219" y="710.500" textLength="80" lengthAdjust="spacingAndGlyphs">Transient-Party</text>
                  <text x="345.700" y="710.500" textLength="46" lengthAdjust="spacingAndGlyphs">Contract</text>
                  <text x="462" y="710.500" textLength="33.500" lengthAdjust="spacingAndGlyphs">Group</text>
                </g>
                <text class="din" x="277" y="727.300" font-size="10.500" textLength="73" lengthAdjust="spacingAndGlyphs">customer_type</text>
                <text class="din" transform="translate(67.500 693) rotate(-90)" font-size="10.500" textLength="164" lengthAdjust="spacingAndGlyphs">Customers, adr and One Person ...</text>
              </svg>
              <svg class="meals" width="428" height="273" viewBox="540 462 428 273">
                <text class="din bold" x="556" y="494.300" font-size="17" textLength="189" lengthAdjust="spacingAndGlyphs">Total Guest by Meal_Text</text>
                <path d="M613 551.800H963M613 631.800H963" stroke="#b3c3cf" stroke-dasharray="1.200 3.950" />
                <path d="M644 541.500H702.700V631.800H644ZM720 616H779V631.800H720ZM796 620H855V631.800H796Z" fill="#104470" />
                <path d="M872.500 630.600H931.500" stroke="#2f6ca4" stroke-width="1.500" />
                <g class="semi" font-size="12.500">
                  <text x="574" y="556.200" textLength="29" lengthAdjust="spacingAndGlyphs">0,1M</text>
                  <text x="574" y="636.200" textLength="29" lengthAdjust="spacingAndGlyphs">0,0M</text>
                  <text x="656.700" y="656" textLength="35.500" lengthAdjust="spacingAndGlyphs">Bed &amp;</text>
                  <text x="647.700" y="672.500" textLength="54" lengthAdjust="spacingAndGlyphs">Breakfast</text>
                  <text x="720" y="656" textLength="61" lengthAdjust="spacingAndGlyphs">Half board</text>
                  <text x="803.300" y="656" textLength="48" lengthAdjust="spacingAndGlyphs">No meal</text>
                  <text x="803.500" y="672.500" textLength="47.500" lengthAdjust="spacingAndGlyphs">package</text>
                  <text x="874.700" y="656" textLength="57.300" lengthAdjust="spacingAndGlyphs">Full board</text>
                </g>
                <text class="din" x="764.500" y="686.300" font-size="10.500" textLength="49" lengthAdjust="spacingAndGlyphs">Meal_Text</text>
                <text class="din" transform="translate(565 598.500) rotate(-90)" font-size="10.500" textLength="54.500" lengthAdjust="spacingAndGlyphs">Total Guest</text>
              </svg>
            </div>
          </section>

          <section class="col-right">
            <nav class="page-nav">
              {#each nav as [name, icon]}
                <button class:current={name === 'Guest'} class:tight={name === 'Hotel'}>{name}{@render emoji(icon, 15)}</button>
              {/each}
            </nav>

            <div class="map">
              <svg width="502" height="326" viewBox="859 82 502 326">
                <defs>
                  <clipPath id="frame"><rect x="864" y="118" width="492" height="285" /></clipPath>
                  <filter id="coast" x="0" y="0" width="100%" height="100%">
                    <feTurbulence type="fractalNoise" baseFrequency=".12" numOctaves="3" seed="4" />
                    <feDisplacementMap in="SourceGraphic" scale="9" xChannelSelector="R" yChannelSelector="G" />
                  </filter>
                </defs>
                <g fill="#605e5c" font-size="13.500">
                  <text class="boldtext" x="864.600" y="108.700" textLength="91" lengthAdjust="spacingAndGlyphs">country_name</text>
                  {@render legendItem('Albania', 977, 108.7, 44.5, '#262a78')}
                  {@render legendItem('Algeria', 1040.5, 108.7, 42, '#24509b')}
                  {@render legendItem('American Samoa', 1101, 108.7, 101, '#2e8ac4')}
                  {@render legendItem('Andorra', 1220.7, 108.7, 48.5, '#28b0d4')}
                  {@render legendItem('Angola', 1288.5, 108.7, 42.5, '#ffc0cb')}
                </g>
                <path d="M1347.500 96L1355.500 103L1347.500 110Z" fill="#252423" stroke="#fff" stroke-width="1.500" />
                <g clip-path="url(#frame)">
                  <rect x="864" y="118" width="492" height="285" fill="#bed0e5" />
                  <g filter="url(#coast)">
                    <rect x="850" y="100" width="520" height="320" fill="#bed0e5" />
                    <g transform="translate(850.500 .5) scale(.35714 .33333)">
                      {#each land as d}<path {d} fill="#f7f4f1" />{/each}
                      {#each water as d}<path {d} fill="#bed0e5" />{/each}
                    </g>
                  </g>
                  {#each bubbles as [x, y, rad, fill, stroke]}
                    <circle cx={850 + x / 2.8} cy={y / 3} r={rad - 0.4} {fill} {stroke} stroke-width=".9" />
                  {/each}
                  {#each mapLabels as [t, x, y, w, kind]}
                    <text class="maplabel {kind}" {x} {y} textLength={w} lengthAdjust="spacingAndGlyphs">{t}</text>
                  {/each}
                  <path d="M870 383h4.700v4.700h-4.700z" fill="#f25022" /><path d="M875.300 383h4.700v4.700h-4.700z" fill="#7fba00" />
                  <path d="M870 388.400h4.700v4.700h-4.700z" fill="#00a4ef" /><path d="M875.300 388.400h4.700v4.700h-4.700z" fill="#ffb900" />
                  <text x="882.500" y="391.800" font-size="9" fill="#737373" textLength="51.500" lengthAdjust="spacingAndGlyphs">Microsoft Bing</text>
                  <g font-family="Roboto, sans-serif" font-size="10.500">
                    <text x="1178" y="395" fill="#111" stroke="#fff" stroke-width="1.500" paint-order="stroke" textLength="120" lengthAdjust="spacingAndGlyphs">© 2024 Microsoft Corporation</text>
                    <text x="1306" y="395" fill="#3355aa" stroke="#fff" stroke-width="1.500" paint-order="stroke" textLength="25" lengthAdjust="spacingAndGlyphs">Terms</text>
                    <path d="M1306 396.500H1331" stroke="#3355aa" stroke-width=".8" />
                  </g>
                </g>
              </svg>
            </div>

            <div class="table-wrap">
              <table>
                <thead><tr><th>country_name</th><th>Total Guest<b class="sort"></b></th><th>%</th></tr></thead>
                <tbody>
                  {#each rows as [name, total, pct]}<tr><td>{name}</td><td>{total}</td><td>{pct}</td></tr>{/each}
                </tbody>
                <tfoot><tr><td>Total</td><td>234.984</td><td>100,00%</td></tr></tfoot>
              </table>
              <div class="scroll"><i></i></div>
            </div>
          </section>
        </div>
      </div>

      <footer class="tabs">
        <div class="views">
          <span class="desktop"><svg width="24" height="19" viewBox="0 0 24 19"><path d="M1 1H23V13.500H1ZM9 13.500V17.500M15 13.500V17.500M6 17.700H18" fill="none" stroke="#484644" stroke-width="1.400" /></svg></span>
          <svg class="phone" width="17" height="26" viewBox="0 0 17 26"><rect x=".9" y=".9" width="14.700" height="24" rx="1.300" fill="none" stroke="#484644" stroke-width="1.500" /><path d="M7 21.500H10" stroke="#484644" stroke-width="1.300" /></svg>
          <svg class="arrows" width="35" height="11" viewBox="0 0 35 11"><path d="M6.500 0V11L0 5.500ZM28 0V11L34.500 5.500Z" fill="#c4c2c0" /></svg>
        </div>
        {#each tabs as tab}
          <div class="tab" class:active={tab.name === 'Guest'} class:tight={tab.name === 'Hotel'} style="width: {tab.width}px">
            {tab.name}{#if tab.icon}{@render emoji(tab.icon, 16)}{/if}
            {#if tab.name === 'Guest'}<small>x</small>{/if}
          </div>
        {/each}
        <div class="add"><svg width="14" height="14" viewBox="0 0 14 14"><path d="M7 0V14M0 7H14" stroke="#fff" stroke-width="3.800" /></svg></div>
      </footer>
    </main>

    <aside class="viz">
      <header><h3>Visualizations</h3>{@render chevrons()}</header>
      <h4>Build visual</h4>
      <div class="modes">
        <span class="mode"><svg width="40" height="40" viewBox="0 0 40 40"><path d="M5 5.500H29" stroke="#252423" stroke-width="1.200" /><g fill="#117865" stroke="#252423" stroke-dasharray="2 1" stroke-width="1.300"><path d="M5.700 11.700H34.500V21H5.700ZM5.700 25.700H34.500V34.500H5.700Z" /></g></svg></span>
        <svg class="format" width="31" height="31" viewBox="0 0 31 31"><path d="M5 29.800H1V1H14L22 9V13M13.500 1.500V9.500H22" fill="none" stroke="#252423" stroke-width="1.400" /><path d="M30 11.500Q27 11 17 21.500L20 24.500Q29 16 30 11.500Z" fill="#f3f2f1" stroke="#252423" stroke-width="1.300" /><path d="M16.500 22Q13 22 13 25.500Q13 28 9 29Q19 31.500 20 25.500Z" fill="none" stroke="#252423" stroke-width="1.300" /></svg>
      </div>
      <svg class="divider" width="225" height="11" viewBox="0 0 225 11"><path d="M0 9.800H20L30 .8L40 9.800H225" fill="none" stroke="#8a8886" /></svg>
      <div class="gallery">
        {#each icons as icon}<svg width="23" height="23" viewBox="0 0 23 23">{@html icon}</svg>{/each}
      </div>
      <div class="more"><i></i><i></i><i></i></div>
      <div class="wells">
        <p class="v">Values</p>
        <div class="drop first">Add data fields here</div>
        <p class="drill">Drill through</p>
        <div class="option">Cross-report<span class="toggle off"><i></i>Off</span></div>
        <div class="option second">Keep all filters<span class="toggle on">On<i></i></span></div>
        <div class="drop last">Add drill-through fields here</div>
      </div>
    </aside>

    <aside class="data">
      <header><h3>Data</h3>{@render chevrons()}</header>
      <div class="search"><svg width="18" height="18" viewBox="0 0 18 18"><circle cx="7.300" cy="7.300" r="6.500" fill="none" stroke="#605e5c" stroke-width="1.200" /><path d="M12 12L17.500 17.500" stroke="#605e5c" stroke-width="1.200" /></svg><span>Search</span></div>
      <ul>
        {#each tables as [name, kind]}
          <li>
            <svg width="9" height="14" viewBox="0 0 9 14"><path d="M1 .8L7.500 7L1 13.200" fill="none" stroke="#605e5c" stroke-width="1.200" /></svg>
            <svg class="kind" width="17" height="18" viewBox="0 0 17 18">
              {#if kind === 'calc'}
                <rect x=".8" y=".8" width="12.800" height="14.800" rx="2.500" fill="none" stroke="#252423" stroke-width="1.300" /><path d="M15.700 3.500V14Q15.700 17.200 12.500 17.200H4" fill="none" stroke="#252423" stroke-width="1.200" /><path d="M4 4H10.500V6H4Z" fill="none" stroke="#252423" /><path d="M4 9.500H5.500M6.600 9.500H8M9.200 9.500H10.600M4 12.500H5.500M6.600 12.500H8M9.200 12.500H10.600" stroke="#252423" stroke-width="1.500" />
              {:else}
                <rect x=".8" y="1.500" width="14" height="14" rx="2.500" fill="none" stroke="#252423" stroke-width="1.300" /><path d="M5.500 1.500V15.500M10.200 1.500V15.500M.8 6.200H14.800M.8 10.900H14.800" stroke="#252423" stroke-width="1.100" />
                {#if kind === 'calcgrid'}<rect x="7.500" y="7.500" width="8.500" height="9.700" rx="1" fill="#f3f2f1" stroke="#252423" stroke-width="1.200" /><path d="M9.500 10H14M9.500 12.700H11M12.500 12.700H14M9.500 14.900H11M12.500 14.900H14" stroke="#252423" stroke-width="1.200" />{/if}
              {/if}
            </svg>
            {name}
          </li>
        {/each}
      </ul>
    </aside>
  </div>

  <div class="status">
    <span class="pages">of 5</span>
    <div class="zoom">
      <svg width="154" height="16" viewBox="0 0 154 16"><path d="M0 7.500H5" stroke="#605e5c" stroke-width="2" /><path d="M9 8H134M71.500 4.500V11.500" stroke="#605e5c" /><path d="M56 1.500H61V14.500H56Z" fill="#605e5c" /><path d="M141 8H150.500M145.700 3.300V12.700" stroke="#484644" stroke-width="1.700" /></svg>
      <span class="pct">82%</span>
      <svg class="fit" width="21" height="17" viewBox="0 0 21 17"><rect x="1" y="1" width="19" height="14.500" fill="none" stroke="#6f7c80" stroke-width="1.700" /><path d="M4 6.500V4.200H7M14 4.200H17V6.500M17 10V12.500H14M7 12.500H4V10" fill="none" stroke="#605e5c" /></svg>
      <span class="update">Update available (click to download)</span>
    </div>
  </div>
  <div class="edge"></div>
</div>

<style>
  :global(body) { margin: 0; overflow: hidden; }
  .app { width: 1867px; height: 821px; display: flex; flex-direction: column; font-family: 'Open Sans', 'Noto Sans', sans-serif; color: #252423; background: #f3f2f1; position: relative; box-sizing: border-box; }
  .app::before { content: ''; position: absolute; inset: 0 0 auto 0; height: 5px; background: linear-gradient(rgba(0, 0, 0, .18), rgba(0, 0, 0, 0)); z-index: 2; }
  svg { display: block; flex: none; }
  h1, h2, h3, h4, p, ul { margin: 0; padding: 0; }
  .workspace { display: flex; height: 789px; border-bottom: 1px solid #dcdad8; }
  .report { width: 1416px; display: flex; flex-direction: column; }
  .canvas { height: 745px; background: #9ac6d9; }
  .page { box-sizing: border-box; margin-left: 51px; width: 1313px; height: 737px; border: 2px dotted #605e5c; border-top: 0; display: flex; background: #9ac6d8; }
  .col-left { width: 800px; flex: none; }
  .col-right { width: 509px; flex: none; }
  .headers { display: flex; height: 95px; padding-left: 10px; gap: 28px; box-sizing: border-box; }
  .year-card, .guest-card { box-sizing: border-box; background: #2066a8; border: 1px solid #2a5ea0; border-radius: 30px; }
  .year-card { width: 387px; height: 74px; margin-top: 16px; display: flex; flex-direction: column; align-items: center; }
  .year-card h2 { font: 700 17px/20px Roboto, sans-serif; margin-top: 10px; letter-spacing: .1px; }
  .years { display: flex; gap: 1px; margin: 6px 0 0 1px; width: 316px; }
  .years span { flex: 1; box-sizing: border-box; height: 27px; border: 1.5px solid #153f63; background: #2e8ac4; text-align: center; font-size: 12.5px; line-height: 25px; color: #111; }
  .guest-card { width: 348px; height: 75px; margin-top: 15px; display: flex; align-items: flex-start; }
  .guest-card h1 { font: 700 29px/34px Roboto, sans-serif; color: #000; margin: 11px 0 0 135px; width: 119px; letter-spacing: -.2px; }
  .traveller { margin-top: 15px; }
  .handle { width: 8px; height: 10px; background: #c8c6c8; margin: 48px 0 0 39px; }
  .row-main { display: flex; height: 367px; }
  .row-bottom { display: flex; height: 273px; }
  .meals { position: relative; z-index: 1; }
  .din { font-family: Roboto, sans-serif; fill: #2b2a29; }
  .bold { font-weight: 700; }
  .semi { font-weight: 700; fill: #000; }
  .boldtext { font-weight: 700; }
  .kpi { width: 150px; display: flex; flex-direction: column; align-items: center; padding: 11px 0 0 21px; flex: none; box-sizing: content-box; }
  .row-main { justify-content: flex-start; }
  .kpi { width: 129px; padding-left: 21px; }
  .kpi strong { font: 400 29px/36px Roboto, sans-serif; margin-top: 26px; letter-spacing: .2px; }
  .kpi span { font-size: 15px; line-height: 20px; color: #605e5c; margin-top: 6px; letter-spacing: .15px; white-space: nowrap; }
  .page-nav { display: flex; padding: 26px 0 0 4px; gap: 10.2px; }
  .page-nav button { box-sizing: border-box; flex: none; width: 117.5px; height: 52px; padding: 0 2px 0 0; border: 1px solid #5a9fce; background: #3a8bc0; font: 400 13.2px 'Open Sans', sans-serif; letter-spacing: -.15px; color: #252423; display: flex; align-items: center; justify-content: center; gap: 6px; }
  .page-nav .tight, .tab.tight { gap: 3px; }
  .page-nav .current { background: #252423; color: #fff; font-weight: 600; border-color: #3a4a55; padding-right: 0; letter-spacing: -.3px; }
  .map { width: 502px; height: 326px; margin: 4px 0 0 6px; background: #2e8ac4; }
  .maplabel { font-family: Roboto, sans-serif; font-size: 11px; fill: #6d6d7a; stroke: #fff; stroke-width: 1.6px; stroke-opacity: .8; paint-order: stroke; }
  .maplabel.o { fill: #5f7fc4; stroke: #d8e2f0; }
  .table-wrap { display: flex; gap: 12px; margin: 6px 0 0 159px; }
  table { width: 323px; border-collapse: collapse; table-layout: fixed; font-size: 13px; letter-spacing: -.05px; }
  th, td { padding: 0 5px; text-align: right; white-space: nowrap; }
  th:first-child, td:first-child { width: 167px; text-align: left; }
  th:nth-child(2), td:nth-child(2) { width: 64px; padding-right: 8px; }
  tbody tr:nth-child(even) td:first-child, tfoot td:first-child, th:first-child { border-right: 1px solid #4f9bcb; }
  th { background: #226891; color: #fff; font-weight: 400; height: 33px; text-align: left; vertical-align: top; line-height: 26px; position: relative; overflow: visible; }
  th:nth-child(3) { padding-left: 7px; }
  th:nth-child(2) { letter-spacing: -.15px; }
  .sort { position: absolute; left: 5px; top: 22px; border: 5px solid transparent; border-top-color: #fff; border-bottom: 0; }
  tbody td { height: 24.5px; line-height: 24.5px; color: #fff; border-top: 1px solid #cfe0ea; }
  tbody tr:nth-child(even) td { background: #3a8bc0; color: #111; }
  tfoot td { background: #226891; color: #fff; font-weight: 700; height: 25px; line-height: 23px; padding-top: 2px; border-top: 2px solid #e0eaf0; }
  .scroll { width: 10px; height: 315px; border-radius: 5px; background: #cbe1ea; }
  .scroll i { display: block; height: 17px; border-radius: 5px; background: #7d9097; }

  .tabs { display: flex; height: 44px; }
  .views { display: flex; width: 158px; border-right: 1px solid #a19f9d; }
  .desktop { width: 28px; height: 28px; margin: 9px 0 0 12px; border-bottom: 3px solid #117865; display: flex; justify-content: center; }
  .phone { margin: 6px 0 0 33px; }
  .arrows { margin: 16px 0 0 26px; }
  .tab { box-sizing: border-box; position: relative; background: #fff; border-right: 1px solid #c8c6c4; display: flex; align-items: center; justify-content: center; gap: 7px; font-size: 14.3px; letter-spacing: 0; padding-right: 2px; }
  .tab:last-of-type { padding-right: 0; }
  .tab.active { border-bottom: 5px solid #117865; font-weight: 600; padding-top: 5px; letter-spacing: -.3px; }
  .tab small { position: absolute; right: 6px; top: 2px; font-size: 12px; font-weight: 600; }
  .add { width: 49px; background: #117865; display: flex; align-items: center; justify-content: center; padding-bottom: 3px; box-sizing: border-box; }

  aside { box-sizing: border-box; border-left: 1px solid #dcdad8; }
  aside header { display: flex; justify-content: space-between; padding: 10px 10px 0 10px; height: 40px; box-sizing: border-box; }
  aside header svg { margin-top: 6px; }
  h3 { font-size: 18.2px; line-height: 28px; font-weight: 600; letter-spacing: -.25px; }
  .viz { width: 226px; }
  h4 { font-size: 14px; line-height: 20px; font-weight: 550; margin: 7px 0 0 10px; letter-spacing: -.1px; }
  .modes { display: flex; margin: 4px 0 0 10px; }
  .mode { background: #d2d0ce; border-radius: 2px; width: 40px; height: 40px; }
  .format { margin: 5px 0 0 48px; }
  .divider { margin-top: 6px; }
  .gallery { display: grid; grid-template-columns: repeat(6, 23px); gap: 12px; padding: 13px 0 0 14px; }
  .gallery svg { overflow: visible; }
  .more { display: flex; gap: 6px; margin: 20px 0 0 16px; height: 26px; }
  .more i { width: 2px; height: 2px; background: #252423; }
  .wells { border-top: 1px solid #dcdad8; padding: 0 7px 0 5px; font-size: 13.8px; line-height: 20px; letter-spacing: .1px; }
  .wells p { padding-left: 10px; }
  .wells .v { margin-top: 11px; letter-spacing: -.1px; }
  .drop { box-sizing: border-box; border: 1px dashed #bdbbb9; border-radius: 2px; background: #fff; display: flex; align-items: center; white-space: nowrap; }
  .drop.first { height: 35px; margin-top: 6px; padding-left: 13px; }
  .drop.last { height: 32px; margin-top: 13px; padding-left: 10px; letter-spacing: .2px; }
  .wells .drill { margin-top: 14px; font-weight: 550; color: #3b3a39; letter-spacing: .25px; }
  .option { display: flex; justify-content: space-between; align-items: center; height: 20px; margin-top: 11px; padding: 0 20px 0 10px; letter-spacing: 0; }
  .option.second { margin-top: 14px; }
  .toggle { box-sizing: border-box; width: 40px; height: 20px; border-radius: 10px; display: flex; align-items: center; gap: 2px; font-size: 11px; padding: 0 5px; letter-spacing: 0; }
  .toggle i { width: 10px; height: 10px; border-radius: 50%; background: #605e5c; flex: none; }
  .toggle.off { background: #fff; border: 1px solid #7a7876; color: #605e5c; }
  .toggle.on { background: #117865; color: #fff; gap: 4px; }
  .toggle.on i { background: #fff; }

  .data { width: 225px; }
  .data header { padding-right: 8px; }
  .search { box-sizing: border-box; height: 30px; margin: 16px 4px 0 5px; border: 1px solid #d2d0ce; border-bottom-color: #605e5c; border-radius: 4px; background: #fff; display: flex; align-items: center; gap: 8px; padding-left: 15px; font-size: 16.5px; color: #605e5c; letter-spacing: -.2px; }
  .search span { padding-top: 2px; }
  ul { list-style: none; padding-top: 11px; }
  li { height: 30px; display: flex; align-items: center; padding-left: 19px; font-size: 13.8px; color: #3b3a39; letter-spacing: 0; }
  li:last-child { letter-spacing: .5px; }
  .kind { margin: 0 6px 0 8px; }

  .status { height: 28px; display: flex; justify-content: space-between; font-size: 14px; color: #484644; line-height: 31px; }
  .pages { padding-left: 1px; letter-spacing: 0; }
  .zoom { display: flex; padding-right: 5px; }
  .zoom > svg:first-child { margin-top: 6px; }
  .pct { margin-left: 15px; width: 50px; line-height: 27px; color: #605e5c; letter-spacing: -.2px; }
  .fit { margin-top: 7px; }
  .update { margin-left: 17px; width: 239px; white-space: nowrap; letter-spacing: .15px; }
  .edge { height: 3px; background: #1b1a19; }
</style>
